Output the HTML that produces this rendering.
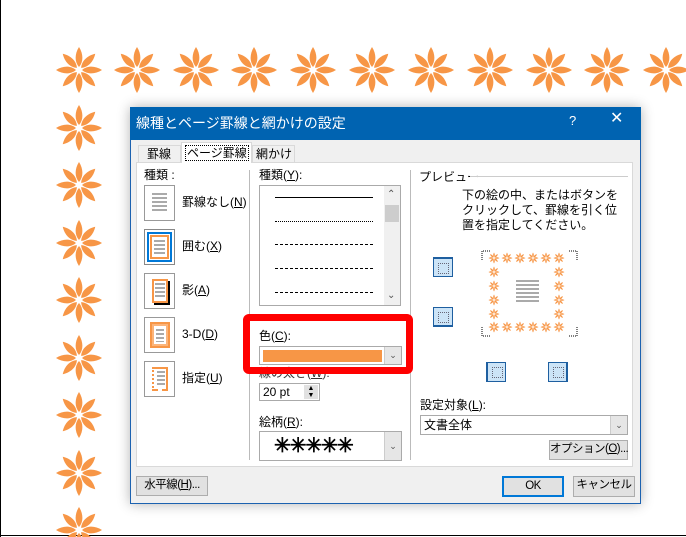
<!DOCTYPE html>
<html><head><meta charset="utf-8"><style>
*{box-sizing:border-box;margin:0;padding:0}
body{width:686px;height:537px;overflow:hidden;background:#fff;position:relative;font-family:"Liberation Sans","Noto Sans CJK JP",sans-serif;font-size:12px;color:#000}
.a{position:absolute}
.t{position:absolute;white-space:nowrap;font-size:12px;line-height:14px}
.box{position:absolute;background:#fff;border:1px solid #aaa}
.btn{position:absolute;background:#e1e1e1;border:1px solid #adadad;text-align:center;font-size:11.5px;line-height:17px;white-space:nowrap;letter-spacing:-0.5px}
.dd{position:absolute;right:0;top:0;bottom:0;width:17px;background:#e6e6e6;border-left:1px solid #ccc;text-align:center;font-size:9px;color:#555}
.ic{position:absolute;left:144px;width:31px;height:36px;border:1px solid #999;background:#fff}
.pb{position:absolute;width:20px;height:20px;border:1px solid #1e5fa0;background:#cce4f7}
.pb i{position:absolute;left:4px;top:4px;width:11px;height:11px;border:1px dotted #667}
</style></head><body>
<div class="a" style="left:0;top:0;width:1px;height:537px;background:#000"></div>
<div class="a" style="left:0;top:535px;width:686px;height:1px;background:#000"></div>
<svg class="a" style="left:0;top:0" width="686" height="537">
<defs>
<path id="p" d="M0,-3 C4.5,-8 4.5,-16 0,-23 C-4.5,-16 -4.5,-8 0,-3Z"/>
<g id="s" fill="#f79646">
<use href="#p"/><use href="#p" transform="rotate(45)"/><use href="#p" transform="rotate(90)"/><use href="#p" transform="rotate(135)"/><use href="#p" transform="rotate(180)"/><use href="#p" transform="rotate(225)"/><use href="#p" transform="rotate(270)"/><use href="#p" transform="rotate(315)"/>
</g>
<g id="m" transform="scale(0.24)"><use href="#s"/></g>
</defs>
<use href="#s" x="79" y="70"/><use href="#s" x="137" y="70"/><use href="#s" x="196" y="70"/><use href="#s" x="254" y="70"/><use href="#s" x="313" y="70"/><use href="#s" x="372" y="70"/><use href="#s" x="431" y="70"/><use href="#s" x="490" y="70"/><use href="#s" x="549" y="70"/><use href="#s" x="607" y="70"/><use href="#s" x="666" y="70"/>
<use href="#s" x="79" y="128"/><use href="#s" x="79" y="185"/><use href="#s" x="79" y="243"/><use href="#s" x="79" y="300"/><use href="#s" x="79" y="358"/><use href="#s" x="79" y="415"/><use href="#s" x="79" y="473"/><use href="#s" x="79" y="530"/>
</svg>
<div class="a" style="left:130px;top:107px;width:511px;height:397px;background:#f0f0f0;border:1px solid #1c62b0;box-shadow:0 0 12px rgba(0,0,0,.3)"></div>
<div class="a" style="left:130px;top:107px;width:511px;height:33px;background:#0063b1"></div>
<div class="t" style="left:136px;top:115px;color:#fff;font-size:14px;line-height:17px">線種とページ罫線と網かけの設定</div>
<div class="t" style="left:569px;top:114px;color:#fff;font-size:13px">?</div>
<div class="t" style="left:610px;top:112px;color:#fff;font-size:16px">✕</div>
<div class="a" style="left:138px;top:145px;width:43px;height:18px;border:1px solid #d9d9d9;border-bottom:none;background:#f0f0f0"></div>
<div class="t" style="left:147px;top:147px">罫線</div>
<div class="a" style="left:252px;top:145px;width:43px;height:18px;border:1px solid #d9d9d9;border-bottom:none;background:#f0f0f0"></div>
<div class="t" style="left:256px;top:147px">網かけ</div>
<div class="a" style="left:136px;top:162px;width:497px;height:305px;background:#fff;border:1px solid #d9d9d9"></div>
<div class="a" style="left:181px;top:142px;width:71px;height:21px;background:#fff;border:1px solid #d9d9d9;border-bottom:none"></div>
<div class="t" style="left:186px;top:146px;outline:1px dotted #000;padding:0 1px">ページ罫線</div>
<div class="a" style="left:249px;top:170px;width:1px;height:290px;background:#bbb"></div>
<div class="a" style="left:410px;top:170px;width:1px;height:290px;background:#bbb"></div>
<div class="t" style="left:144px;top:168px">種類 :</div>
<div class="ic" style="top:185px"><div class="a" style="left:7px;top:7px;width:15px;height:20px;background:repeating-linear-gradient(#aaa 0 2px,transparent 2px 4px)"></div></div>
<div class="t" style="left:182px;top:195px">罫線なし(<u>N</u>)</div>
<div class="ic" style="top:229px;border:1px solid #888"><div class="a" style="left:2px;top:2px;width:25px;height:30px;border:2px solid #0078d7"></div><div class="a" style="left:5px;top:5px;width:19px;height:24px;border:2px solid #f79646;background:#fff"></div><div class="a" style="left:9px;top:10px;width:11px;height:15px;background:repeating-linear-gradient(#aaa 0 2px,transparent 2px 4px)"></div></div>
<div class="t" style="left:182px;top:239px">囲む(<u>X</u>)</div>
<div class="ic" style="top:273px"><div class="a" style="left:7px;top:5px;width:16px;height:24px;border:2px solid #f79646;box-shadow:2px 2px 0 #000"></div><div class="a" style="left:10px;top:9px;width:10px;height:16px;background:repeating-linear-gradient(#aaa 0 2px,transparent 2px 4px)"></div></div>
<div class="t" style="left:182px;top:283px">影(<u>A</u>)</div>
<div class="ic" style="top:317px"><div class="a" style="left:5px;top:4px;width:20px;height:26px;border:2px solid #f79646;background:#fbb47a"></div><div class="a" style="left:9px;top:8px;width:12px;height:18px;background:#fff"></div><div class="a" style="left:11px;top:11px;width:8px;height:13px;background:repeating-linear-gradient(#aaa 0 2px,transparent 2px 4px)"></div></div>
<div class="t" style="left:182px;top:327px">3-D(<u>D</u>)</div>
<div class="ic" style="top:361px"><div class="a" style="left:7px;top:5px;width:16px;height:24px;border-top:2px solid #f79646;border-right:2px solid #f79646;border-left:2px dotted #f79646;border-bottom:2px dashed #f79646"></div><div class="a" style="left:12px;top:9px;width:8px;height:15px;background:repeating-linear-gradient(#aaa 0 2px,transparent 2px 4px)"></div></div>
<div class="t" style="left:182px;top:371px">指定(<u>U</u>)</div>
<div class="t" style="left:259px;top:168px">種類(<u>Y</u>):</div>
<div class="box" style="left:259px;top:185px;width:142px;height:121px">
<div class="a" style="left:15px;top:11px;width:98px;border-top:1px solid #000"></div>
<div class="a" style="left:15px;top:35px;width:98px;border-top:1px dotted #000"></div>
<div class="a" style="left:15px;top:58px;width:98px;border-top:1px dashed #000"></div>
<div class="a" style="left:15px;top:82px;width:98px;border-top:1px dashed #000"></div>
<div class="a" style="left:15px;top:106px;width:98px;border-top:1px dashed #000"></div>
<div class="a" style="left:124px;top:0;width:16px;height:119px;background:#f0f0f0"></div>
<div class="a" style="left:125px;top:19px;width:14px;height:17px;background:#cdcdcd"></div>
<div class="t" style="left:127px;top:2px;font-size:10px;color:#555">⌃</div>
<div class="t" style="left:127px;top:103px;font-size:10px;color:#555">⌄</div>
</div>
<div class="t" style="left:259px;top:329px">色(<u>C</u>):</div>
<div class="box" style="left:259px;top:346px;width:143px;height:19px"><div class="a" style="left:3px;top:3px;width:119px;height:12px;background:#f79646"></div><div class="dd" style="line-height:17px">⌄</div></div>
<div class="t" style="left:259px;top:366px;color:#333">線の太さ(<u>W</u>):</div>
<div class="a" style="left:243px;top:314px;width:170px;height:60px;border:7px solid #f00;border-radius:6px"></div>
<div class="box" style="left:259px;top:383px;width:61px;height:18px"><div class="t" style="left:3px;top:1px">20 pt</div><div class="a" style="left:44px;top:1px;width:14px;height:14px;background:#e1e1e1;font-size:7px;line-height:7px;text-align:center">▲<br>▼</div></div>
<div class="t" style="left:259px;top:415px">絵柄(<u>R</u>):</div>
<div class="box" style="left:259px;top:431px;width:143px;height:30px"><div class="t" style="left:14px;top:3px;font-size:20px;line-height:22px;font-weight:bold;letter-spacing:-1px">✳✳✳✳✳</div><div class="dd" style="line-height:28px">⌄</div></div>
<div class="t" style="left:419px;top:170px">プレビュー</div>
<div class="a" style="left:470px;top:176px;width:158px;height:1px;background:#ccc"></div>
<div class="t" style="left:462px;top:188px;line-height:15px">下の絵の中、またはボタンを<br>クリックして、罫線を引く位<br>置を指定してください。</div>
<div class="pb" style="left:433px;top:257px;border-top:2px solid #1e5fa0"><i></i></div>
<div class="pb" style="left:433px;top:307px;border-bottom:2px solid #1e5fa0"><i></i></div>
<div class="pb" style="left:486px;top:362px;border-left:2px solid #1e5fa0"><i></i></div>
<div class="pb" style="left:548px;top:362px;border-right:2px solid #1e5fa0"><i></i></div>
<svg class="a" style="left:480px;top:244px" width="100" height="100">
<g fill="none" stroke="#000" stroke-dasharray="1 1"><path d="M2,16V7H10M97,16V7H89M2,83V92H10M97,83V92H89"/></g>
<use href="#m" x="14" y="14"/><use href="#m" x="27" y="14"/><use href="#m" x="40" y="14"/><use href="#m" x="53" y="14"/><use href="#m" x="66" y="14"/><use href="#m" x="79" y="14"/>
<use href="#m" x="14" y="83"/><use href="#m" x="27" y="83"/><use href="#m" x="40" y="83"/><use href="#m" x="53" y="83"/><use href="#m" x="66" y="83"/><use href="#m" x="79" y="83"/>
<use href="#m" x="14" y="28"/><use href="#m" x="14" y="42"/><use href="#m" x="14" y="56"/><use href="#m" x="14" y="70"/>
<use href="#m" x="79" y="28"/><use href="#m" x="79" y="42"/><use href="#m" x="79" y="56"/><use href="#m" x="79" y="70"/>
</svg>
<div class="a" style="left:516px;top:280px;width:23px;height:22px;background:repeating-linear-gradient(#aaa 0 2px,transparent 2px 4px)"></div>
<div class="t" style="left:420px;top:398px">設定対象(<u>L</u>):</div>
<div class="box" style="left:420px;top:415px;width:208px;height:20px"><div class="t" style="left:3px;top:2px">文書全体</div><div class="dd" style="line-height:18px">⌄</div></div>
<div class="btn" style="left:549px;top:440px;width:79px;height:20px">オプション(<u>O</u>)...</div>
<div class="btn" style="left:136px;top:476px;width:72px;height:20px">水平線(<u>H</u>)...</div>
<div class="btn" style="left:502px;top:476px;width:62px;height:21px;border:2px solid #0078d7;line-height:16px">OK</div>
<div class="btn" style="left:573px;top:476px;width:62px;height:21px">キャンセル</div>
</body></html>
